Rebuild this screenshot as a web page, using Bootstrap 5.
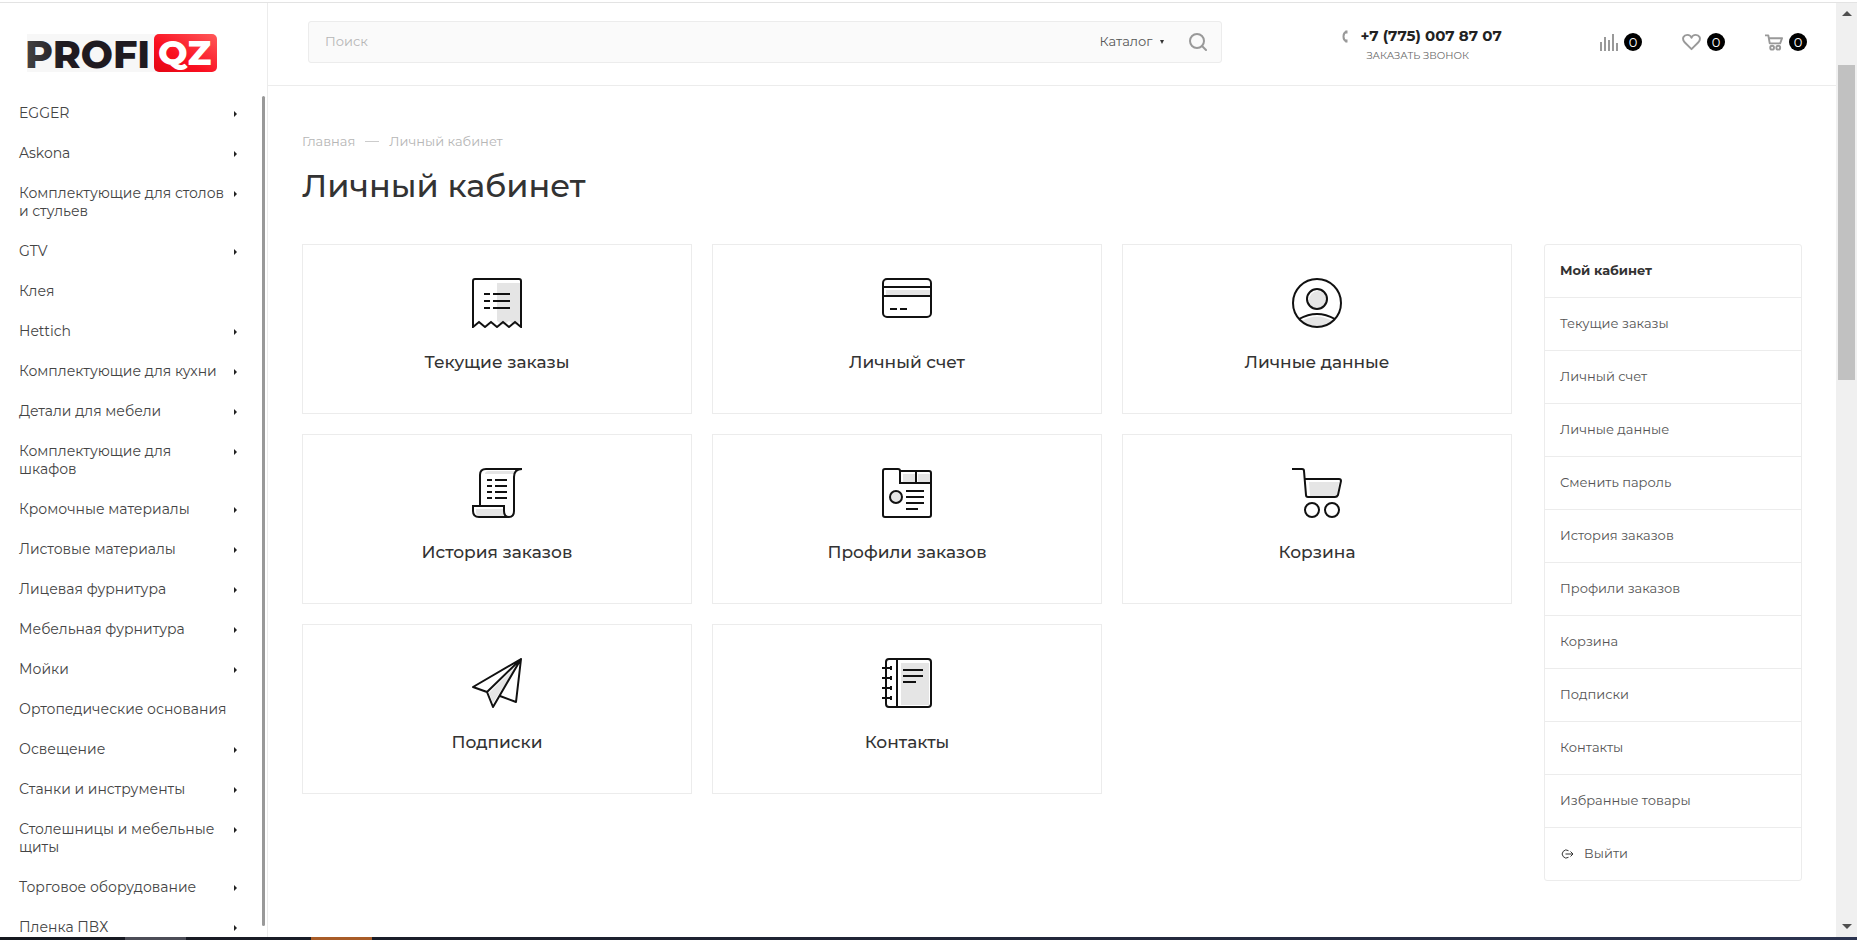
<!DOCTYPE html>
<html lang="ru">
<head>
<meta charset="utf-8">
<meta name="viewport" content="width=device-width, initial-scale=1">
<title>Личный кабинет</title>
<link rel="stylesheet" href="https://cdn.jsdelivr.net/npm/bootstrap@5.3.0/dist/css/bootstrap.min.css">
<style>
  :root { --line: #ececec; }
  html, body { height: 100%; overflow: hidden; }
  body { font-family: Montserrat, Inter, "Liberation Sans", sans-serif; font-size: 13px; color: #333; background: #fff; }
  a { color: inherit; text-decoration: none; }
  .shell { border-top: 1px solid #e3e3e3; margin-top: 2px; min-height: 0; }
  .side { width: 268px; border-right: 1px solid var(--line); overflow: hidden; }
  .brand { margin: 31px 0 0 27px; width: 190px; height: 38px; }
  .brand svg { overflow: visible; }
  .side-body { margin-top: 24px; min-height: 0; }
  .side-menu { overflow: hidden; min-height: 0; }
  .side-menu a { padding: 8px 20px 14px 19px; font-size: 14px; line-height: 18px; font-weight: 400; color: #444; }
  .side-menu span { width: 215px; }
  .tri-r::after { content: ""; width: 0; height: 0; flex: none; border: 3px solid transparent; border-left-color: #222; border-right: 0; margin-top: 7px; }
  .side-thumb { width: 3px; background: #999; border-radius: 2px; margin: 0 2px 11px 0; }
  .top { height: 83px; border-bottom: 1px solid var(--line); padding: 0 29px 0 40px; }
  .find { margin-top: 18px; height: 42px; background: #fafafa; border: 1px solid var(--line); border-radius: 3px; flex: 0 0 61%; padding-right: 14px; }
  .find input { background: none; border: 0; outline: 0; font-size: 13px; font-weight: 400; padding-left: 16px; }
  .find input::placeholder { color: #b6b6b6; opacity: 1; }
  .find button, .call { background: none; border: 0; padding: 0; }
  .find .cat { font-size: 13px; font-weight: 400; color: #555; margin-right: 24px; }
  .cat::after { content: ""; border: 2px solid transparent; border-top: 4px solid #333; border-bottom: 0; margin: 0 1px 0 8px; }
  .phones { margin: 23px 0 0 120px; line-height: 20px; }
  .phones .tel { font-size: 15px; font-weight: 700; color: #222; }
  .call { font-size: 10px; line-height: 12px; color: #666; margin: 4px 0 0 24px; }
  .tools { margin-top: 30px; gap: 40px; }
  .tools a { gap: 6px; height: 18px; }
  .num { min-width: 18px; height: 18px; border-radius: 9px; background: #000; color: #fff; font-size: 13px; line-height: 18px; text-align: center; }
  .page { padding: 45px 34px 0 34px; }
  .crumbs { font-size: 13px; line-height: 20px; color: #b6b6b6; gap: 10px; }
  .crumbs i { width: 14px; height: 1px; background: #ccc; }
  h1 { font-size: 32px; line-height: 40px; font-weight: 500; margin: 15px 0 38px; color: #333; }
  .page-cols { gap: 32px; }
  .tiles { display: grid; grid-template-columns: repeat(3, 1fr); gap: 20px; }
  .tile { height: 170px; border: 1px solid var(--line); padding-top: 33px; font-size: 17px; font-weight: 500; line-height: 24px; color: #333; }
  .tile svg { display: block; margin: 0 auto 22px; }
  .acct { width: 258px; border: 1px solid var(--line); border-radius: 3px; }
  .acct a { height: 53px; padding: 0 15px; font-size: 13px; font-weight: 400; color: #555; border-bottom: 1px solid var(--line); }
  .acct a:last-child { border-bottom: 0; height: 52px; }
  .acct a.on { font-weight: 700; color: #333; }
  .bar { width: 21px; background: #f0f0f0; }
  .bar .up { margin: 8px auto 0; border: 5px solid transparent; border-bottom-color: #505050; border-top: 0; }
  .bar .thumb { width: 17px; height: 315px; margin: 49px auto 0; background: #c1c1c1; }
  .bar .down { margin: auto auto 8px; border: 5px solid transparent; border-top-color: #505050; border-bottom: 0; }
  .dock { height: 3px; background: linear-gradient(90deg, #16181f, #2c3450); }
  .dock i { width: 61px; background: #4c4d57; margin-left: 125px; }
  .dock i + i { background: #a85c28; }
</style>
</head>
<body class="d-flex flex-column">
<div class="shell d-flex flex-grow-1">
  <aside class="side d-flex flex-column flex-shrink-0">
    <a href="#" class="brand" aria-label="PROFI QZ">
      <svg width="190" height="38" viewBox="0 0 190 38" class="d-block">
        <defs><linearGradient id="red" x1="0" y1="1" x2="1" y2="0"><stop offset="0" stop-color="#e30613"/><stop offset=".4" stop-color="#fa0f20"/><stop offset="1" stop-color="#ff5a5a"/></linearGradient>
        <linearGradient id="ink"><stop offset="0" stop-color="#444"/><stop offset=".3" stop-color="#1f1a20"/></linearGradient></defs>
        <rect width="140" height="38" fill="#f7f7f7"/>
        <rect x="127" width="63" height="38" rx="5" fill="url(#red)"/>
        <text x="-2" y="34" font-size="38" font-weight="800" font-family="Montserrat, Inter, sans-serif" fill="url(#ink)">PROFI</text>
        <text x="131" y="31" font-size="35" font-weight="800" font-family="Montserrat, Inter, sans-serif" fill="#fff">QZ</text>
      </svg>
    </a>
    <div class="side-body d-flex flex-grow-1">
      <nav class="side-menu flex-grow-1">
        <a href="#" class="d-flex align-items-start tri-r"><span>EGGER</span></a>
        <a href="#" class="d-flex align-items-start tri-r"><span>Askona</span></a>
        <a href="#" class="d-flex align-items-start tri-r"><span>Комплектующие для столов и стульев</span></a>
        <a href="#" class="d-flex align-items-start tri-r"><span>GTV</span></a>
        <a href="#" class="d-flex"><span>Клея</span></a>
        <a href="#" class="d-flex align-items-start tri-r"><span>Hettich</span></a>
        <a href="#" class="d-flex align-items-start tri-r"><span>Комплектующие для кухни</span></a>
        <a href="#" class="d-flex align-items-start tri-r"><span>Детали для мебели</span></a>
        <a href="#" class="d-flex align-items-start tri-r"><span>Комплектующие для<br>шкафов</span></a>
        <a href="#" class="d-flex align-items-start tri-r"><span>Кромочные материалы</span></a>
        <a href="#" class="d-flex align-items-start tri-r"><span>Листовые материалы</span></a>
        <a href="#" class="d-flex align-items-start tri-r"><span>Лицевая фурнитура</span></a>
        <a href="#" class="d-flex align-items-start tri-r"><span>Мебельная фурнитура</span></a>
        <a href="#" class="d-flex align-items-start tri-r"><span>Мойки</span></a>
        <a href="#" class="d-flex"><span>Ортопедические основания</span></a>
        <a href="#" class="d-flex align-items-start tri-r"><span>Освещение</span></a>
        <a href="#" class="d-flex align-items-start tri-r"><span>Станки и инструменты</span></a>
        <a href="#" class="d-flex align-items-start tri-r"><span>Столешницы и мебельные щиты</span></a>
        <a href="#" class="d-flex align-items-start tri-r"><span>Торговое оборудование</span></a>
        <a href="#" class="d-flex align-items-start tri-r"><span>Пленка ПВХ</span></a>
      </nav>
      <div class="side-thumb flex-shrink-0"></div>
    </div>
  </aside>

  <div class="flex-grow-1 overflow-hidden">
    <header class="top d-flex align-items-start">
      <form class="find d-flex align-items-center" role="search">
        <input type="text" class="flex-grow-1" placeholder="Поиск" aria-label="Поиск">
        <button type="button" class="cat d-flex align-items-center">Каталог</button>
        <button type="button" aria-label="Найти"><svg width="18" height="18" viewBox="0 0 18 18" fill="none" stroke="#999" stroke-width="2" class="d-block"><circle cx="8" cy="8" r="7"/><path d="M13 13l4 4" stroke-linecap="round"/></svg></button>
      </form>
      <div class="phones">
        <div class="d-flex align-items-center">
          <svg width="6" height="13" viewBox="0 0 6 13" fill="none" stroke="#999" class="me-2"><path d="M4.500 1.500C.5 3 .5 10 4.500 11.500" stroke-width="2"/><path d="M3.500 2h2M3.500 11h2" stroke-width="3"/></svg>
          <a href="tel:+77750078707" class="tel ms-1">+7 (775) 007 87 07</a>
        </div>
        <button type="button" class="call d-block">ЗАКАЗАТЬ ЗВОНОК</button>
      </div>
      <div class="tools d-flex ms-auto">
        <a href="#" class="d-flex align-items-center" aria-label="Сравнение"><svg width="18" height="18" viewBox="0 0 18 18" stroke="#999" stroke-width="2"><path d="M1 9v9M5 4v14M9 7v11M13 1v17M17 10v8"/></svg><span class="num">0</span></a>
        <a href="#" class="d-flex align-items-center" aria-label="Избранное"><svg width="19" height="18" viewBox="0 0 20 18" fill="none" stroke="#999" stroke-width="2" stroke-linejoin="round"><path d="M10 16.500L2.500 9C-.5 5 2 1.500 5.500 1.500 8 1.500 9.500 3 10 4.500 10.500 3 12 1.500 14.500 1.500 18 1.500 20.500 5 17.500 9z"/></svg><span class="num">0</span></a>
        <a href="#" class="d-flex align-items-center" aria-label="Корзина"><svg width="18" height="18" viewBox="0 0 19 18" fill="none" stroke="#999" stroke-width="2" stroke-linejoin="round"><path d="M0 2h3.500l1.500 8.500h11L18 5H4.500"/><circle cx="7.500" cy="15" r="2"/><circle cx="14" cy="15" r="2"/></svg><span class="num">0</span></a>
      </div>
    </header>

    <main class="page">
      <nav class="crumbs d-flex align-items-center"><a href="#">Главная</a><i></i><span>Личный кабинет</span></nav>
      <h1>Личный кабинет</h1>
      <div class="page-cols d-flex align-items-start">
        <div class="tiles flex-grow-1">
          <a href="#" class="tile text-center"><svg width="50" height="50" viewBox="0 0 50 50" fill="none" stroke="#111" stroke-width="2"><path d="M25 5h24v38l-6 4-6-4-6 4-6-4z" fill="#e5e5e5" stroke="none"/><path d="M1 49V3q0-2 2-2h44q2 0 2 2v46l-6-5-6 5-6-5-6 5-6-5-6 5-6-5z"/><path d="M12 16h6M21 16h17M12 23h6M21 23h17M12 30h6M21 30h17"/></svg>Текущие заказы</a>
          <a href="#" class="tile text-center"><svg width="50" height="50" viewBox="0 0 50 50" fill="none" stroke="#111" stroke-width="2"><path d="M4 12h44v5H4z" fill="#e5e5e5" stroke="none"/><rect x="1" y="1" width="48" height="38" rx="4"/><path d="M1 9h48M1 18h48M8 31h7M18 31h7"/></svg>Личный счет</a>
          <a href="#" class="tile text-center"><svg width="50" height="50" viewBox="0 0 50 50" fill="none" stroke="#111" stroke-width="2"><path d="M10 43Q25 34 40 43Q25 53 10 43z" fill="#e5e5e5" stroke="none"/><circle cx="26" cy="22" r="9" fill="#e5e5e5" stroke="none"/><circle cx="25" cy="25" r="24"/><circle cx="25" cy="21" r="10"/><path d="M7 41Q25 31 43 41"/></svg>Личные данные</a>
          <a href="#" class="tile text-center"><svg width="50" height="50" viewBox="0 0 50 50" fill="none" stroke="#111" stroke-width="2"><path d="M13 6q0-3 4-3h27l-2 3zM4 41h27l2 7H8q-4 0-4-4z" fill="#e5e5e5" stroke="none"/><path d="M8 38V7q0-6 6-6h36q-8 0-8 8v34q0 6-5 6H7q-6 0-6-6v-5h31v5q0 6 5 6M15 12h5M23 12h12M15 18h5M23 18h12M15 24h5M23 24h12M15 30h5M23 30h12"/></svg>История заказов</a>
          <a href="#" class="tile text-center"><svg width="50" height="50" viewBox="0 0 50 50" fill="none" stroke="#111" stroke-width="2"><path d="M21 6h12v8H21zM36 6h12v8H36z" fill="#e5e5e5" stroke="none"/><path d="M18 3q0-2-2-2H3Q1 1 1 3v44q0 2 2 2h44q2 0 2-2V5q0-2-2-2H18v12h31M34 3v12M24 23h18M24 29h18M24 35h18M24 41h12"/><circle cx="14" cy="29" r="6" fill="#e5e5e5"/></svg>Профили заказов</a>
          <a href="#" class="tile text-center"><svg width="50" height="50" viewBox="0 0 50 50" fill="none" stroke="#111" stroke-width="2"><path d="M17 14h30l-2 14H18z" fill="#e5e5e5" stroke="none"/><path d="M0 1h10q2 0 2 2l2 24q0 2 2 2h27q2 0 3-2l3-14q0-2-2-2H13"/><circle cx="20" cy="42" r="7"/><circle cx="40" cy="42" r="7"/></svg>Корзина</a>
          <a href="#" class="tile text-center"><svg width="50" height="50" viewBox="0 0 50 50" fill="none" stroke="#111" stroke-width="2" stroke-linejoin="round"><path d="M46 6L17 35l4 10z" fill="#e5e5e5" stroke="none"/><path d="M49 1L1 29l14 5zM15 34l6 15L49 1M28 38l16 6 5-43"/></svg>Подписки</a>
          <a href="#" class="tile text-center"><svg width="50" height="50" viewBox="0 0 50 50" fill="none" stroke="#111" stroke-width="2"><path d="M19 5h28v42H19z" fill="#e5e5e5" stroke="none"/><rect x="4" y="1" width="45" height="48" rx="3"/><path d="M15 1v48M21 12h20M21 18h20M21 24h13M0 10h10M0 20h10M0 30h10M0 40h10"/><path d="M9 8v4M9 18v4M9 28v4M9 38v4"/></svg>Контакты</a>
        </div>
        <nav class="acct flex-shrink-0">
          <a href="#" class="on d-flex align-items-center">Мой кабинет</a>
          <a href="#" class="d-flex align-items-center">Текущие заказы</a>
          <a href="#" class="d-flex align-items-center">Личный счет</a>
          <a href="#" class="d-flex align-items-center">Личные данные</a>
          <a href="#" class="d-flex align-items-center">Сменить пароль</a>
          <a href="#" class="d-flex align-items-center">История заказов</a>
          <a href="#" class="d-flex align-items-center">Профили заказов</a>
          <a href="#" class="d-flex align-items-center">Корзина</a>
          <a href="#" class="d-flex align-items-center">Подписки</a>
          <a href="#" class="d-flex align-items-center">Контакты</a>
          <a href="#" class="d-flex align-items-center">Избранные товары</a>
          <a href="#" class="d-flex align-items-center gap-2"><svg width="16" height="10" viewBox="0 0 16 10" fill="none" stroke="#333"><path d="M8.500 1.700A4 4 0 1 0 8.500 8.300M5.500 5H13M10.500 2.500L13 5l-2.500 2.500"/></svg>Выйти</a>
        </nav>
      </div>
    </main>
  </div>
  <div class="bar d-flex flex-column flex-shrink-0" aria-hidden="true"><div class="up"></div><div class="thumb"></div><div class="down"></div></div>
</div>
<div class="dock d-flex flex-shrink-0"><i></i><i></i></div>
<script src="https://cdn.jsdelivr.net/npm/bootstrap@5.3.0/dist/js/bootstrap.bundle.min.js"></script>
</body>
</html>
